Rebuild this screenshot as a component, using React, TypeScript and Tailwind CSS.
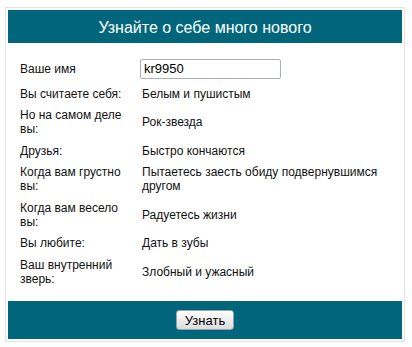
import React from "react";

interface Row {
  label: string;
  value: string;
}

const rows: Row[] = [
  { label: "Вы считаете себя:", value: "Белым и пушистым" },
  { label: "Но на самом деле вы:", value: "Рок-звезда" },
  { label: "Друзья:", value: "Быстро кончаются" },
  { label: "Когда вам грустно вы:", value: "Пытаетесь заесть обиду подвернувшимся другом" },
  { label: "Когда вам весело вы:", value: "Радуетесь жизни" },
  { label: "Вы любите:", value: "Дать в зубы" },
  { label: "Ваш внутренний зверь:", value: "Злобный и ужасный" },
];

const App: React.FC = () => {
  return (
    <div
      className="w-[412px] h-[347px] bg-white pt-[7px] pl-[5px]"
      style={{ fontFamily: '"Liberation Sans", Arial, sans-serif' }}
    >
      <div className="w-[400px] border border-[#e3e3e3] p-[2px]">
        <div className="h-[33px] bg-[#01667b] flex items-center justify-center pt-[2px]">
          <h1 className="text-white text-[16px] leading-none">Узнайте о себе много нового</h1>
        </div>

        <div className="pt-[11px] pb-[11.5px] pl-[12px] text-[12px] leading-[14px] text-[#111]">
          <div className="flex items-center py-[4.5px]">
            <div className="w-[120px] shrink-0">Ваше имя</div>
            <input
              type="text"
              defaultValue="kr9950"
              className="w-[141px] h-[20px] border border-[#a9b0b6] rounded-[2px] px-[3px] text-[13px] text-black outline-none"
            />
          </div>
          {rows.map((row) => (
            <div key={row.label} className="flex items-center py-[3.75px]">
              <div className="w-[110px] shrink-0 mr-[12px]">{row.label}</div>
              <div className="w-[250px]">{row.value}</div>
            </div>
          ))}
        </div>

        <div className="h-[38px] bg-[#01667b] flex items-center justify-center">
          <button className="w-[58px] h-[20px] border border-[#9aa3a8] rounded-[3px] bg-gradient-to-b from-white to-[#dcdcdc] text-[13px] text-black leading-none">
            Узнать
          </button>
        </div>
      </div>
    </div>
  );
};

export default App;
